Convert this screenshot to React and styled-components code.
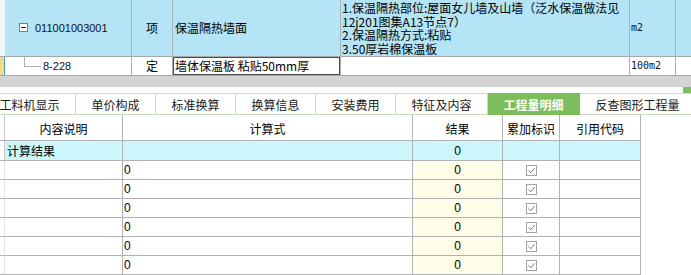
import React from 'react';
import styled, { createGlobalStyle } from 'styled-components';

const GlobalStyle = createGlobalStyle`
  html, body { margin: 0; padding: 0; background: #fff; }
  body {
    font-family: "Noto Sans CJK SC", "Liberation Sans", sans-serif;
    font-size: 12px;
    color: #000;
    overflow: hidden;
  }
`;

const Page = styled.div`
  width: 691px;
  height: 275px;
  overflow: hidden;
  display: flex;
  flex-direction: column;
`;

const TopGrid = styled.div`
  display: grid;
  grid-template-columns: 5px 127px 41px 168px 289px 46px 1fr;
  grid-template-rows: 57px 19px;
`;

const TopCell = styled.div`
  box-sizing: border-box;
  background: ${p => p.$bg || '#fff'};
  border-right: ${p => (p.$noRight ? 'none' : '1px solid #a7b3b8')};
  border-bottom: 1px solid #a8a8a8;
  display: flex;
  align-items: center;
  justify-content: ${p => (p.$center ? 'center' : 'flex-start')};
  padding-left: ${p => p.$pl || 0}px;
  overflow: hidden;
  white-space: nowrap;
  line-height: 14px;
  box-shadow: ${p => p.$shadow || 'none'};
`;

const FeatureCell = styled(TopCell)`
  flex-direction: column;
  align-items: stretch;
  justify-content: flex-start;
  padding-top: 1px;
`;

const FeatureLine = styled.div`
  height: 13.7px;
  line-height: 13.7px;
  font-size: 12px;
  white-space: nowrap;
`;

const Code = styled.span`
  font-family: "Liberation Sans", sans-serif;
  font-size: 11px;
  color: #111;
`;

const Mono = styled.span`
  font-family: "DejaVu Sans Mono", monospace;
  font-size: 10px;
  color: #111;
`;

const ExpandBox = styled.span`
  box-sizing: border-box;
  width: 9px;
  height: 9px;
  border: 1px solid #7d7d7d;
  background: #fff;
  display: flex;
  align-items: center;
  justify-content: center;
  margin-right: 7px;
  margin-top: -1px;
  &::before {
    content: '';
    width: 5px;
    height: 1px;
    background: #222;
  }
`;

const TreeLine = styled.span`
  align-self: flex-start;
  box-sizing: border-box;
  width: 17px;
  height: 10px;
  border-left: 1px solid #b0b0b0;
  border-bottom: 1px solid #b0b0b0;
  margin-right: 2px;
  flex-shrink: 0;
`;

const GrayStrip = styled.div`
  height: 16px;
  background: #d4d4d4;
`;

const Spacer = styled.div`
  height: 9px;
  display: flex;
  justify-content: flex-end;
  align-items: flex-start;
`;

const GreenNub = styled.span`
  width: 8px;
  height: 6px;
  background: #7dbd5d;
`;

const TabBar = styled.div`
  display: flex;
  height: 31px;
  box-sizing: border-box;
  border-top: 1px solid #c8e0b8;
  border-bottom: 1px solid #c4d8ba;
  margin-left: -16px;
`;

const Tab = styled.div`
  flex-shrink: 0;
  display: flex;
  align-items: center;
  padding: 0 15.5px;
  margin-top: ${p => (p.$active ? '-1px' : '0')};
  margin-bottom: ${p => (p.$active ? '-1px' : '0')};
  border-right: 1px solid ${p => (p.$active ? '#7dbd5d' : '#c8e0b8')};
  background: ${p => (p.$active ? '#7dbd5d' : '#fff')};
  color: ${p => (p.$active ? '#fff' : '#1a1a1a')};
  font-weight: ${p => (p.$active ? 700 : 400)};
  font-size: 12px;
  white-space: nowrap;
`;

const Table = styled.div`
  display: grid;
  width: 641px;
  grid-template-columns: 5px 118px 290px 90px 57px 81px;
  grid-auto-rows: 19px;
  grid-template-rows: 26px 20px;
`;

const Cell = styled.div`
  box-sizing: border-box;
  border-right: 1px solid ${p => p.$line || '#b2b2b2'};
  border-bottom: 1px solid #b2b2b2;
  background: ${p => p.$bg || '#fff'};
  display: flex;
  align-items: center;
  justify-content: ${p => (p.$center ? 'center' : 'flex-start')};
  padding-left: ${p => p.$pl || 0}px;
  padding-top: ${p => p.$pt || 0}px;
  white-space: nowrap;
  overflow: hidden;
  font-size: 12px;
  line-height: 14px;
`;

const Num = styled.span`
  font-family: "Liberation Sans", sans-serif;
  font-size: 12px;
  color: #000;
`;

const CheckBox = styled.span`
  box-sizing: border-box;
  width: 11px;
  height: 11px;
  border: 1px solid #a3a3a3;
  background: #fff;
  display: flex;
  align-items: center;
  justify-content: center;
`;

const Check = () => (
  <CheckBox>
    <svg width="9" height="9" viewBox="0 0 9 9">
      <path d="M1.5 4.5 L3.8 6.8 L7.5 2.2" fill="none" stroke="#7a7a7a" strokeWidth="1" />
    </svg>
  </CheckBox>
);

const BLUE = '#b4e4f6';
const CYAN = '#caf6fc';
const CREAM = '#fffce8';

const tabs = ['工料机显示', '单价构成', '标准换算', '换算信息', '安装费用', '特征及内容', '工程量明细', '反查图形工程量'];

const features = [
  '1.保温隔热部位:屋面女儿墙及山墙（泛水保温做法见',
  '12j201图集A13节点7）',
  '2.保温隔热方式:粘贴',
  '3.50厚岩棉保温板',
];

const headers = ['内容说明', '计算式', '结果', '累加标识', '引用代码'];

export default function App() {
  const rows = [0, 1, 2, 3, 4, 5];
  return (
    <Page>
      <GlobalStyle />
      <TopGrid>
        <TopCell $bg="#eef6f9" $noRight />
        <TopCell $bg={BLUE} $pl={14}>
          <ExpandBox />
          <Code>011001003001</Code>
        </TopCell>
        <TopCell $bg={BLUE} $center>项</TopCell>
        <TopCell $bg={BLUE} $pl={2}>保温隔热墙面</TopCell>
        <FeatureCell $bg={BLUE} $pl={1}>
          {features.map(f => (
            <FeatureLine key={f}>{f}</FeatureLine>
          ))}
        </FeatureCell>
        <TopCell $bg={BLUE} $pl={1}>
          <Mono>m2</Mono>
        </TopCell>
        <TopCell $bg={BLUE} $noRight />

        <TopCell $bg="#f7d98a" $noRight $shadow="inset -1px 0 0 #3f9fc6" />
        <TopCell $pl={19}>
          <TreeLine />
          <Code>8-228</Code>
        </TopCell>
        <TopCell $center>定</TopCell>
        <TopCell $pl={2} $shadow="inset 1px 0 0 #4a4a4a, inset 0 1px 0 #4a4a4a, inset -1px -1px 0 #4a4a4a">
          墙体保温板 粘贴50mm厚
        </TopCell>
        <TopCell />
        <TopCell $pl={1}>
          <Mono>100m2</Mono>
        </TopCell>
        <TopCell $noRight />
      </TopGrid>
      <GrayStrip />
      <Spacer>
        <GreenNub />
      </Spacer>
      <TabBar>
        {tabs.map(t => (
          <Tab key={t} $active={t === '工程量明细'}>
            {t}
          </Tab>
        ))}
      </TabBar>
      <Table>
        <Cell $line="#c8c8c8" />
        {headers.map(h => (
          <Cell key={h} $center $pt={2}>
            {h}
          </Cell>
        ))}

        <Cell $line="#c8c8c8" />
        <Cell $bg={CYAN} $pl={2}>计算结果</Cell>
        <Cell $bg={CYAN} />
        <Cell $bg={CYAN} $center>
          <Num>0</Num>
        </Cell>
        <Cell $bg={CYAN} />
        <Cell $bg={CYAN} />

        {rows.map(r => (
          <React.Fragment key={r}>
            <Cell $line="#e0e0e0" />
            <Cell />
            <Cell $pl={1}>
              <Num>0</Num>
            </Cell>
            <Cell $bg={CREAM} $center>
              <Num>0</Num>
            </Cell>
            <Cell $center>
              <Check />
            </Cell>
            <Cell />
          </React.Fragment>
        ))}
      </Table>
    </Page>
  );
}
